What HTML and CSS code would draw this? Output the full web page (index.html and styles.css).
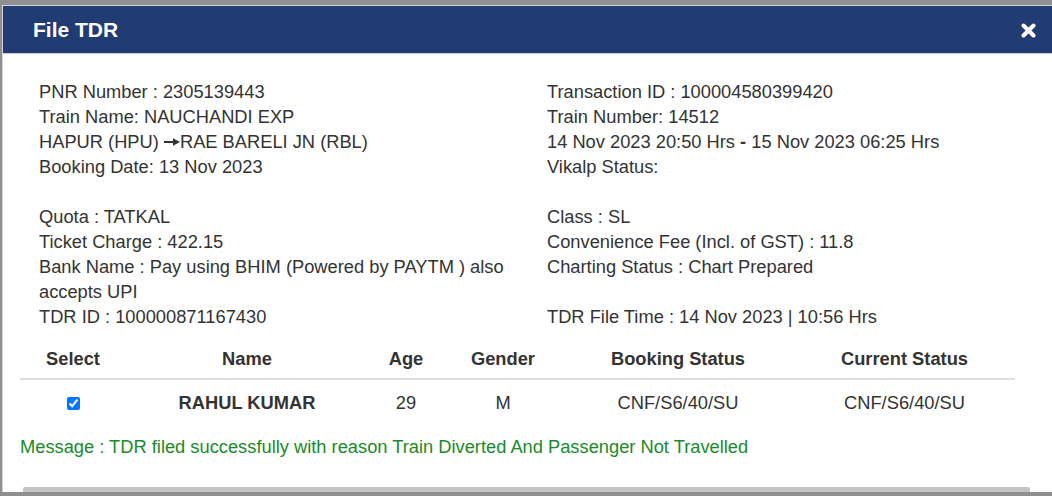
FILE: index.html
```html
<!DOCTYPE html>
<html>
<head>
<meta charset="utf-8">
<link rel="stylesheet" href="styles.css">
</head>
<body>
<div class="modal">
  <div class="modal-header">
    <h4 class="modal-title">File TDR</h4>
    <svg class="close" width="15" height="15" viewBox="0 0 15 15"><path d="M2.5 2.5 L12.5 12.5 M12.5 2.5 L2.5 12.5" stroke="#fff" stroke-width="4" stroke-linecap="round"/></svg>
  </div>
  <div class="modal-body">
    <div class="info">
      <div>PNR Number : 2305139443</div>
      <div>Transaction ID : 100004580399420</div>
      <div>Train Name: NAUCHANDI EXP</div>
      <div>Train Number: 14512</div>
      <div>HAPUR (HPU) <svg class="arrow" width="16" height="10" viewBox="0 0 16 10"><path d="M0 5 H10" stroke="#333" stroke-width="2"/><path d="M9 1.2 L16 5 L9 8.8 Z" fill="#333"/></svg>RAE BARELI JN (RBL)</div>
      <div>14 Nov 2023 20:50 Hrs <b>-</b> 15 Nov 2023 06:25 Hrs</div>
      <div>Booking Date: 13 Nov 2023</div>
      <div>Vikalp Status:</div>
    </div>
    <div class="info info-second">
      <div>Quota : TATKAL</div>
      <div>Class : SL</div>
      <div>Ticket Charge : 422.15</div>
      <div>Convenience Fee (Incl. of GST) : 11.8</div>
      <div>Bank Name : Pay using BHIM (Powered by PAYTM ) also accepts UPI</div>
      <div>Charting Status : Chart Prepared</div>
      <div>TDR ID : 100000871167430</div>
      <div>TDR File Time : 14 Nov 2023 | 10:56 Hrs</div>
    </div>
    <table class="pax">
      <thead>
        <tr>
          <th class="c-sel">Select</th>
          <th class="c-name">Name</th>
          <th class="c-age">Age</th>
          <th class="c-gen">Gender</th>
          <th class="c-book">Booking Status</th>
          <th class="c-cur">Current Status</th>
        </tr>
      </thead>
      <tbody>
        <tr>
          <td><input type="checkbox" class="chk" checked></td>
          <td class="name">RAHUL KUMAR</td>
          <td>29</td>
          <td>M</td>
          <td>CNF/S6/40/SU</td>
          <td>CNF/S6/40/SU</td>
        </tr>
      </tbody>
    </table>
    <div class="message">Message : TDR filed successfully with reason Train Diverted And Passenger Not Travelled</div>
  </div>
  <div class="scrollbar"></div>
</div>
</body>
</html>
```
FILE: styles.css
```css
html, body {
  margin: 0;
  padding: 0;
}
body {
  background: #8f8f8f;
  height: 496px;
  overflow: hidden;
  font-family: "Liberation Sans", Arial, sans-serif;
  font-size: 18.3px;
  color: #333;
}
.modal {
  margin: 5px 0 0 2px;
  background: #fff;
  border: 1px solid #d4d4d4;
  border-right: none;
  border-bottom: none;
}
.modal-header {
  height: 47px;
  background: #213b73;
  border-bottom: 1px solid #c9ced6;
  display: flex;
  align-items: center;
  justify-content: space-between;
  padding: 0 16px 0 30px;
}
.modal-title {
  margin: 0;
  color: #fff;
  font-size: 21px;
  font-weight: bold;
  padding-top: 1px;
}
.close {
  display: block;
  margin-top: 2px;
}
.modal-body {
  padding: 25px 0 0 17px;
}
.info {
  display: grid;
  grid-template-columns: 508px 1fr;
  padding-left: 19px;
  line-height: 25px;
}
.info > div {
  padding-right: 15px;
}
.info-second {
  margin-top: 25px;
}
.arrow {
  vertical-align: 1px;
}
.pax {
  margin-top: 11px;
  width: 995px;
  border-collapse: collapse;
  text-align: center;
  line-height: 22px;
}
.pax th {
  padding: 8px;
  font-weight: bold;
  border-bottom: 2px solid #dedede;
}
.pax td {
  padding: 12px 8px;
}
.c-sel { width: 90px; }
.c-name { width: 226px; }
.c-age { width: 60px; }
.c-gen { width: 102px; }
.c-book { width: 216px; }
.pax .name {
  font-weight: bold;
}
.chk {
  margin: 0;
  width: 13px;
  height: 13px;
  vertical-align: -1px;
}
.message {
  margin-top: 8px;
  line-height: 25px;
  color: #1a8a2a;
}
.scrollbar {
  margin: 28px 0 0 20px;
  width: 1007px;
  height: 5px;
  background: #c4c4c4;
  border-radius: 2px 2px 0 0;
}
```
